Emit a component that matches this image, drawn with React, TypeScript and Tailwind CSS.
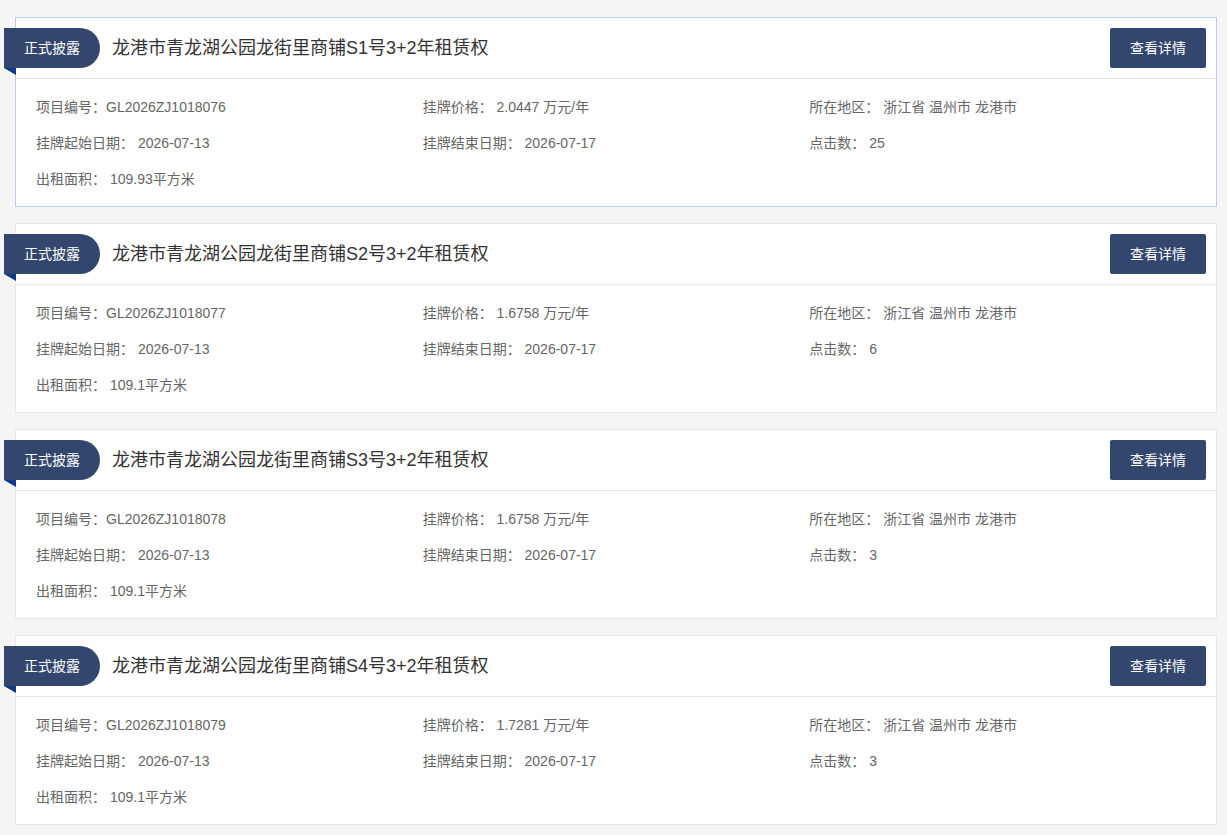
import React from "react";

const items = [
  { no: "S1", code: "GL2026ZJ1018076", price: "2.0447", clicks: "25", area: "109.93", active: true },
  { no: "S2", code: "GL2026ZJ1018077", price: "1.6758", clicks: "6", area: "109.1", active: false },
  { no: "S3", code: "GL2026ZJ1018078", price: "1.6758", clicks: "3", area: "109.1", active: false },
  { no: "S4", code: "GL2026ZJ1018079", price: "1.7281", clicks: "3", area: "109.1", active: false },
];

export default function App() {
  return (
    <div
      className="min-h-[835px] w-[1227px] bg-[#f5f5f6] pt-[17px] pl-[15px] pr-[10px]"
      style={{ fontFamily: '"Liberation Sans", Arial, "Noto Sans CJK SC", sans-serif' }}
    >
      <div className="flex flex-col gap-[16px]">
        {items.map((it) => (
          <div
            key={it.no}
            className={`relative bg-white border ${it.active ? "border-[#b9cdea]" : "border-[#e6e6e6]"} h-[190px]`}
          >
            <div className="relative flex h-[61px] items-center border-b border-[#e6e6e6]">
              <div className="absolute left-[-12px] top-[10px]">
                <div className="flex h-[40px] w-[96px] items-center rounded-r-[20px] bg-[#33466e] pl-[20px] text-[14px] text-white">
                  正式披露
                </div>
                <svg width="12" height="7" viewBox="0 0 12 7" className="block">
                  <polygon points="0,0 12,0 12,7" fill="#0d3a86" />
                </svg>
              </div>
              <div className="ml-[96px] text-[18px] text-[#333]">
                龙港市青龙湖公园龙街里商铺{it.no}号3+2年租赁权
              </div>
              <button className="ml-auto mr-[10px] h-[40px] w-[96px] rounded-[2px] bg-[#33466e] text-[14px] text-white">
                查看详情
              </button>
            </div>
            <div className="grid grid-cols-3 px-[20px] py-[10px] text-[14px] leading-[36px] text-[#666]">
              <div>项目编号：{it.code}</div>
              <div>挂牌价格： {it.price} 万元/年</div>
              <div>所在地区： 浙江省 温州市 龙港市</div>
              <div>挂牌起始日期： 2026-07-13</div>
              <div>挂牌结束日期： 2026-07-17</div>
              <div>点击数： {it.clicks}</div>
              <div>出租面积： {it.area}平方米</div>
            </div>
          </div>
        ))}
      </div>
    </div>
  );
}
